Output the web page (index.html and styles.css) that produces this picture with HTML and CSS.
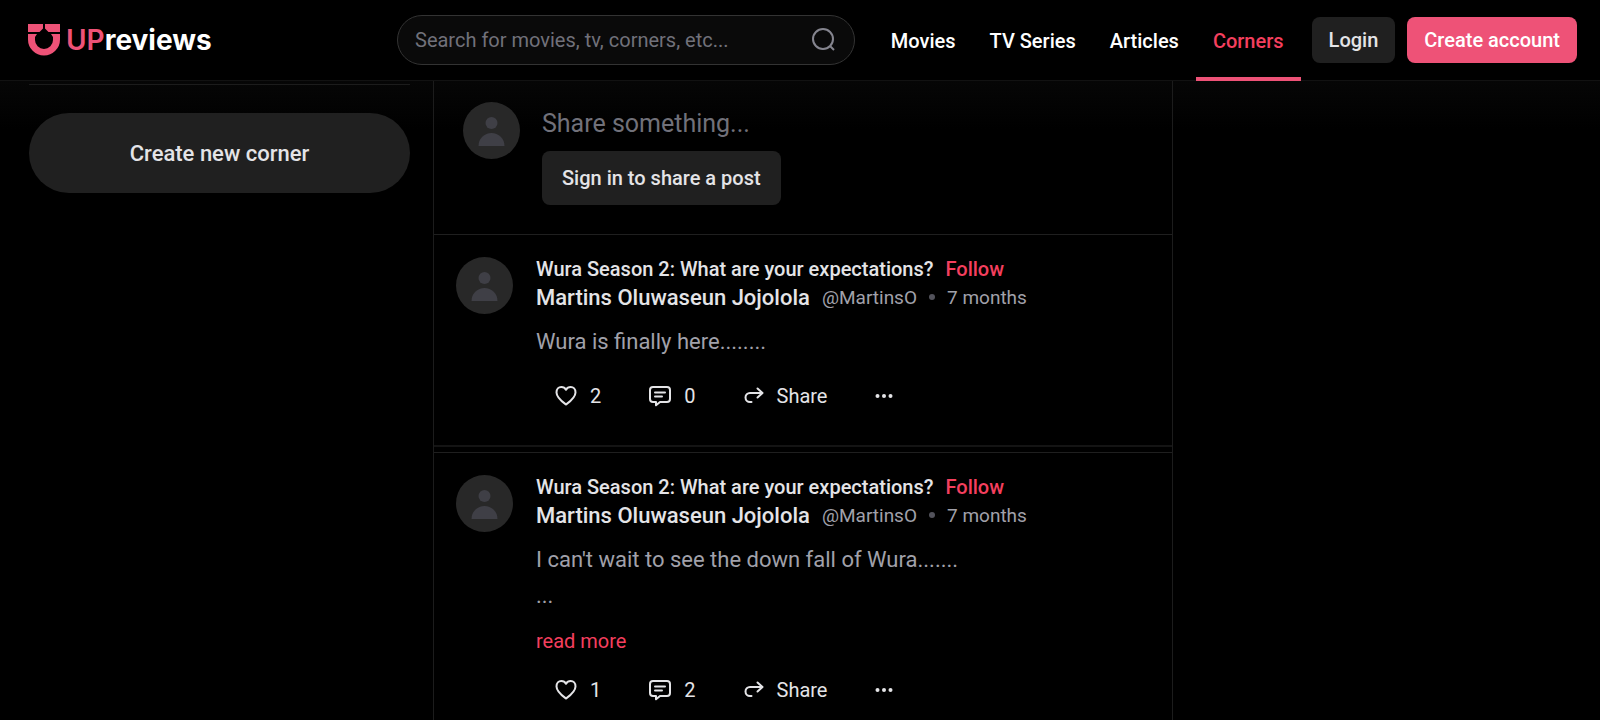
FILE: index.html
```html
<!DOCTYPE html>
<html lang="en">
<head>
  <meta charset="UTF-8" />
  <meta name="viewport" content="width=device-width, initial-scale=1.0"/>
  <title>Corners | UPreviews</title>
  <link rel="stylesheet" href="styles.css">
</head>
<body>

<!-- Shared icons -->
<svg class="sprite" aria-hidden="true">
  <symbol id="icon-user" viewBox="0 0 57 57">
    <circle cx="28.500" cy="21" r="6" />
    <path d="M15.500 44a13 13 0 0 1 26 0z" />
  </symbol>
  <symbol id="icon-heart" viewBox="0 0 22 22">
    <path d="M11 19.500C7 16.500 1.500 12.600 1.500 7.400 1.500 4.200 3.600 2 6.300 2c2 0 3.700 1 4.700 2.800C12 3 13.700 2 15.700 2c2.700 0 4.800 2.200 4.800 5.400 0 5.200-5.500 9.100-9.500 12.100z" />
  </symbol>
  <symbol id="icon-comment" viewBox="0 0 22 22">
    <path d="M4 2h14a3 3 0 0 1 3 3v9a3 3 0 0 1-3 3h-7l-4 3.300V17H4a3 3 0 0 1-3-3V5a3 3 0 0 1 3-3z" />
    <path d="M6 7.500h10M6 11.500h7" />
  </symbol>
  <symbol id="icon-share" viewBox="0 0 20 22">
    <path d="M13.500 3.500L18.500 8l-5 4.500M18 8H6a4.500 4.500 0 0 0 0 9h1.500" />
  </symbol>
  <symbol id="icon-more" viewBox="0 0 18 22">
    <circle cx="2.500" cy="11" r="2" />
    <circle cx="9" cy="11" r="2" />
    <circle cx="15.500" cy="11" r="2" />
  </symbol>
</svg>

<header class="header">
  <a href="#" class="logo">
    <svg class="logo-mark" viewBox="0 0 32 32" aria-hidden="true">
      <path d="M0 0h15v4.500L11.500 8H0zM17 0h15v8H20.500L17 4.500z" />
      <path d="M0 10h9l-2 3v3a9 9 0 0 0 18 0v-3l-2-3h9v5.500a16 16 0 0 1-32 0z" />
    </svg>
    <span class="logo-text"><span class="logo-up">UP</span>reviews</span>
  </a>

  <form class="search">
    <input type="text" class="search-input" placeholder="Search for movies, tv, corners, etc..." aria-label="Search">
    <button type="button" class="search-button" aria-label="Search">
      <svg viewBox="0 0 24 24"><circle cx="11" cy="11" r="10" /><path d="M18 18l4 4" /></svg>
    </button>
  </form>

  <nav class="nav">
    <a href="#">Movies</a>
    <a href="#">TV Series</a>
    <a href="#">Articles</a>
    <a href="#" class="active">Corners</a>
  </nav>

  <div class="account">
    <button type="button" class="button">Login</button>
    <button type="button" class="button button-primary">Create account</button>
  </div>
</header>

<div class="layout">
  <aside class="sidebar">
    <button type="button" class="create-corner">Create new corner</button>
  </aside>

  <main class="feed">
    <section class="composer">
      <svg class="avatar"><use href="#icon-user" /></svg>
      <div class="composer-body">
        <input type="text" class="composer-input" placeholder="Share something..." aria-label="Share something">
        <button type="button" class="button button-large">Sign in to share a post</button>
      </div>
    </section>

    <article class="post">
      <svg class="avatar"><use href="#icon-user" /></svg>
      <div class="post-body">
        <div class="post-corner">
          <a href="#" class="corner-name">Wura Season 2: What are your expectations?</a>
          <button type="button" class="follow">Follow</button>
        </div>
        <div class="post-author">
          <a href="#" class="author-name">Martins Oluwaseun Jojolola</a>
          <span>@MartinsO</span>
          <span class="dot"></span>
          <span>7 months</span>
        </div>
        <p class="post-text">Wura is finally here........</p>
        <div class="actions">
          <button type="button"><svg class="icon"><use href="#icon-heart" /></svg>2</button>
          <button type="button"><svg class="icon"><use href="#icon-comment" /></svg>0</button>
          <button type="button"><svg class="icon icon-share"><use href="#icon-share" /></svg>Share</button>
          <button type="button" aria-label="More"><svg class="icon icon-more"><use href="#icon-more" /></svg></button>
        </div>
      </div>
    </article>

    <article class="post">
      <svg class="avatar"><use href="#icon-user" /></svg>
      <div class="post-body">
        <div class="post-corner">
          <a href="#" class="corner-name">Wura Season 2: What are your expectations?</a>
          <button type="button" class="follow">Follow</button>
        </div>
        <div class="post-author">
          <a href="#" class="author-name">Martins Oluwaseun Jojolola</a>
          <span>@MartinsO</span>
          <span class="dot"></span>
          <span>7 months</span>
        </div>
        <p class="post-text">I can't wait to see the down fall of Wura.......<br>...</p>
        <a href="#" class="read-more">read more</a>
        <div class="actions">
          <button type="button"><svg class="icon"><use href="#icon-heart" /></svg>1</button>
          <button type="button"><svg class="icon"><use href="#icon-comment" /></svg>2</button>
          <button type="button"><svg class="icon icon-share"><use href="#icon-share" /></svg>Share</button>
          <button type="button" aria-label="More"><svg class="icon icon-more"><use href="#icon-more" /></svg></button>
        </div>
      </div>
    </article>
  </main>
</div>

</body>
</html>
```
FILE: styles.css
```css
* {
  box-sizing: border-box;
}

body {
  margin: 0;
  min-height: 100vh;
  display: flex;
  flex-direction: column;
  background-color: #000;
  color: #e4e4e7;
  font-family: Roboto, "Liberation Sans", sans-serif;
  font-size: 20px;
}

a {
  color: inherit;
  text-decoration: none;
}

button,
input {
  margin: 0;
  padding: 0;
  border: 0;
  background: none;
  color: inherit;
  font: inherit;
}

button {
  cursor: pointer;
}

.sprite {
  position: absolute;
  width: 0;
  height: 0;
}

/* Header */
.header {
  display: flex;
  align-items: center;
  height: 81px;
  padding: 0 23px 0 28px;
  border-bottom: 1px solid #121212;
}

.logo {
  flex: 0 0 369px;
  display: flex;
  align-items: center;
  gap: 6px;
}

.logo-mark {
  width: 32px;
  height: 32px;
  fill: #ee5277;
}

.logo-text {
  color: #fff;
  font-family: Inter, sans-serif;
  font-size: 28px;
  font-weight: 700;
}

.logo-up {
  color: #ee5277;
  font-weight: 600;
}

.search {
  flex: 1;
  display: flex;
  align-items: center;
  height: 50px;
  margin-right: 19px;
  padding: 0 18px 0 17px;
  border: 1px solid #333;
  border-radius: 25px;
  background-color: #0a0a0a;
}

.search-input {
  flex: 1;
  min-width: 0;
}

.search-input::placeholder,
.composer-input::placeholder {
  color: #71717a;
  opacity: 1;
}

.search-button svg {
  display: block;
  width: 24px;
  height: 24px;
  fill: none;
  stroke: #85858f;
  stroke-width: 2;
}

.nav {
  display: flex;
  align-self: stretch;
  color: #fff;
  font-weight: 500;
}

.nav a {
  display: flex;
  align-items: center;
  height: 81px;
  padding: 4px 17px 0;
  border-bottom: 4px solid transparent;
}

.nav .active {
  color: #f43f5e;
  border-color: #ee5277;
}

.account {
  display: flex;
  gap: 12px;
  margin-left: 11px;
}

.button {
  height: 46px;
  padding: 0 17px;
  border-radius: 8px;
  background-color: #202020;
  font-weight: 500;
}

.button-primary {
  background-color: #ee5277;
  color: #fff;
}

.button-large {
  height: 54px;
  padding: 0 20px;
}

/* Columns */
.layout {
  flex: 1;
  display: grid;
  grid-template-columns: 433fr 740fr 427fr;
  background: linear-gradient(#060606, #000 48px);
}

.sidebar {
  margin: 3px 23px 0 29px;
  padding-top: 28px;
  border-top: 1px solid #1c1c1c;
}

.create-corner {
  width: 100%;
  height: 80px;
  border-radius: 40px;
  background-color: #202020;
  font-size: 22px;
  font-weight: 500;
}

.feed {
  border: 1px solid #1c1c1c;
  border-width: 0 1px;
}

.avatar {
  flex: none;
  width: 57px;
  height: 57px;
  border-radius: 50%;
  background-color: #282828;
  fill: #3f3f46;
}

.composer {
  display: flex;
  gap: 22px;
  padding: 21px 29px 29px;
}

.composer-body {
  flex: 1;
}

.composer-input {
  display: block;
  width: 100%;
  height: 42px;
  margin-bottom: 7px;
  font-size: 25px;
}

/* Posts */
.post {
  display: flex;
  gap: 23px;
  padding: 22px 22px 37px;
  border-top: 1px solid #1f1f1f;
  border-bottom: 2px solid #141414;
}

.post + .post {
  margin-top: 5px;
}

.post:last-child {
  padding-bottom: 0;
  border-bottom: 0;
}

.post-corner,
.post-author {
  display: flex;
  align-items: center;
  gap: 12px;
}

.post-corner {
  height: 24px;
  font-weight: 500;
}

.follow,
.read-more {
  color: #f43f5e;
}

.post-author {
  height: 32px;
  color: #a1a1aa;
  font-size: 19px;
}

.author-name {
  color: #e4e4e7;
  font-size: 22px;
  font-weight: 500;
}

.dot {
  width: 6px;
  height: 6px;
  border-radius: 50%;
  background-color: #52525b;
}

.post-text {
  margin: 11px 0 0;
  color: #a1a1aa;
  font-size: 22px;
  line-height: 36px;
}

.read-more {
  display: block;
  margin-top: 14px;
  line-height: 26px;
}

.actions {
  display: flex;
  gap: 48px;
  margin-top: 24px;
  padding-left: 19px;
}

.actions button {
  display: flex;
  align-items: center;
  gap: 13px;
  height: 24px;
}

.icon {
  width: 22px;
  height: 22px;
  fill: none;
  stroke: #e4e4e7;
  stroke-width: 2;
  stroke-linecap: round;
  stroke-linejoin: round;
}

.icon-share {
  width: 20px;
}

.icon-more {
  width: 18px;
  fill: #e4e4e7;
  stroke: none;
}
```
